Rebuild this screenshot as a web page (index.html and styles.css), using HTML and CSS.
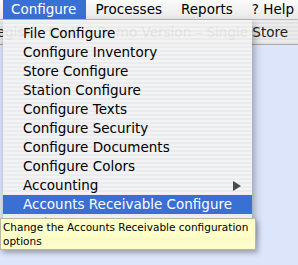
FILE: index.html
```html
<!DOCTYPE html>
<html lang="en">
<head>
    <meta charset="UTF-8">
    <meta name="viewport" content="width=device-width, initial-scale=1.0">
    <title>Configure Menu</title>
    <link rel="stylesheet" href="styles.css">
</head>
<body>

    <div class="menubar">
        <span class="menubar-item active">Configure</span>
        <span class="menubar-item">Processes</span>
        <span class="menubar-item">Reports</span>
        <span class="menubar-item">? Help</span>
    </div>

    <div class="window">
        <div class="titlebar">
            <span class="title">Register for the Demo Version – Single Store</span>
        </div>
        <div class="window-body"></div>
    </div>

    <!-- dropdown for Configure -->
    <div class="menu">
        <div class="menu-item">File Configure</div>
        <div class="menu-item">Configure Inventory</div>
        <div class="menu-item">Store Configure</div>
        <div class="menu-item">Station Configure</div>
        <div class="menu-item">Configure Texts</div>
        <div class="menu-item">Configure Security</div>
        <div class="menu-item">Configure Documents</div>
        <div class="menu-item">Configure Colors</div>
        <div class="menu-item submenu">Accounting <span class="arrow"></span></div>
        <div class="menu-item selected">Accounts Receivable Configure</div>
        <div class="menu-item disabled">Web Store</div>
    </div>

    <div class="tooltip">Change the Accounts Receivable configuration options</div>

</body>
</html>
```

FILE: styles.css
```css
/* General Styling */
body {
    margin: 0;
    width: 298px;
    height: 265px;
    overflow: hidden;
    position: relative;
    font-family: "DejaVu Sans", sans-serif;
    font-size: 13.5px;
    background-color: #dde5fb;
}

.menubar {
    display: flex;
    height: 19px;
    border-bottom: 1px solid #b9b9b9;
    background: linear-gradient(#fbfbfb, #e9e9e9);
}

.menubar-item {
    line-height: 18px;
    padding: 0 10px 0 9px;
    color: #000;
    white-space: nowrap;
}

.menubar-item.active {
    margin-left: 3px;
    padding: 0 10px 0 8px;
    background-color: #3a6fd3;
    color: white;
}

.window {
    display: flex;
    flex-direction: column;
}

.titlebar {
    height: 24px;
    display: flex;
    justify-content: flex-end;
    align-items: center;
    padding-right: 10px;
    border-bottom: 1px solid #a9a9a9;
    background: repeating-linear-gradient(#ececec 0, #ececec 2px, #e2e2e2 2px, #e2e2e2 4px);
    white-space: nowrap;
    overflow: hidden;
}

.title {
    color: #222;
}

.menu {
    position: absolute;
    top: 20px;
    left: 3px;
    width: 249px;
    padding: 4px 0;
    background: repeating-linear-gradient(rgba(244, 244, 244, 0.93) 0, rgba(244, 244, 244, 0.93) 2px, rgba(236, 236, 236, 0.93) 2px, rgba(236, 236, 236, 0.93) 4px);
    box-shadow: 2px 4px 8px rgba(0, 0, 0, 0.35);
}

.menu-item {
    height: 19px;
    line-height: 19px;
    padding-left: 20px;
    position: relative;
    white-space: nowrap;
}

.menu-item.selected {
    background-color: #3a6fd3;
    color: white;
}

.menu-item.disabled {
    color: #a8a8a8;
}

.menu-item .arrow {
    position: absolute;
    right: 11px;
    top: 5px;
    border-left: 8px solid #4a4a4a;
    border-top: 5px solid transparent;
    border-bottom: 5px solid transparent;
}

.tooltip {
    position: absolute;
    top: 218px;
    left: 0;
    width: 250px;
    height: 28px;
    padding: 1px 2px;
    font-size: 10.5px;
    line-height: 14px;
    background-color: rgba(255, 255, 199, 0.94);
    border: 1px solid #b8b8a0;
    box-shadow: 2px 3px 5px rgba(0, 0, 0, 0.3);
}
```
